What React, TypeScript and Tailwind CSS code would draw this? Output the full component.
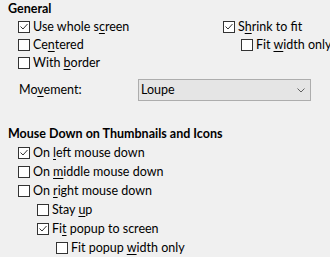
import { ReactNode } from 'react'

function Box({ checked }: { checked?: boolean }) {
  return (
    <span className="flex h-[12px] w-[12px] shrink-0 items-center justify-center border border-[#333333] bg-white">
      {checked && (
        <svg width="10" height="10" viewBox="0 0 10 10" className="block">
          <path d="M1.5 4.5 L4 7 L8.5 2" fill="none" stroke="#333333" strokeWidth="1" />
        </svg>
      )}
    </span>
  )
}

function Check({
  label,
  checked,
  indent = 0,
  h = 'h-[18px]',
}: {
  label: ReactNode
  checked?: boolean
  indent?: number
  h?: string
}) {
  const pad = ['pl-0', 'pl-[19px]', 'pl-[38px]'][indent]
  return (
    <div className={`flex items-center whitespace-nowrap ${h} ${pad}`}>
      <Box checked={checked} />
      <span className="ml-[3px] leading-[18px]">{label}</span>
    </div>
  )
}

function U({ children }: { children: ReactNode }) {
  return <span className="underline underline-offset-[2px] decoration-1">{children}</span>
}

export default function App() {
  return (
    <div
      className="h-[257px] w-[330px] overflow-hidden bg-[#f0f0f0] pl-[8px] text-[12.5px] text-black"
      style={{ fontFamily: 'Lato, "Liberation Sans", sans-serif' }}
    >
      <div className="h-[18px] font-bold leading-[17px]">General</div>
      <div className="flex">
        <div className="w-[215px] shrink-0 pl-[10px]">
          <Check checked label={<>Use whole s<U>c</U>reen</>} />
          <Check label={<>Ce<U>n</U>tered</>} />
          <Check label={<>With <U>b</U>order</>} />
        </div>
        <div className="shrink-0">
          <Check checked label={<>S<U>h</U>rink to fit</>} />
          <div className="pl-[18px]">
            <Check label={<>Fit <U>w</U>idth only</>} />
          </div>
        </div>
      </div>
      <div className="mt-[7px] flex h-[22px] items-center pl-[11px]">
        <span className="w-[119px] shrink-0">
          Mo<U>v</U>ement:
        </span>
        <div className="flex h-[22px] w-[173px] shrink-0 items-center justify-between border border-[#adadad] bg-[#e5e5e5] pl-[2px] pr-[5px]">
          <span>Loupe</span>
          <svg width="8" height="5" viewBox="0 0 8 5">
            <path d="M0.5 0.5 L4 4 L7.5 0.5" fill="none" stroke="#606060" strokeWidth="1" />
          </svg>
        </div>
      </div>
      <div className="mt-[24px] h-[18px] whitespace-nowrap font-bold leading-[17px]">Mouse Down on Thumbnails and Icons</div>
      <div className="pl-[10px]">
        <Check h="h-[19px]" checked label={<>On <U>l</U>eft mouse down</>} />
        <Check h="h-[19px]" label={<>On <U>m</U>iddle mouse down</>} />
        <Check h="h-[19px]" label={<>On <U>r</U>ight mouse down</>} />
        <Check h="h-[19px]" indent={1} label={<>Stay <U>u</U>p</>} />
        <Check h="h-[19px]" indent={1} checked label={<>Fi<U>t</U> popup to screen</>} />
        <Check h="h-[19px]" indent={2} label={<>Fit popup <U>w</U>idth only</>} />
      </div>
    </div>
  )
}
